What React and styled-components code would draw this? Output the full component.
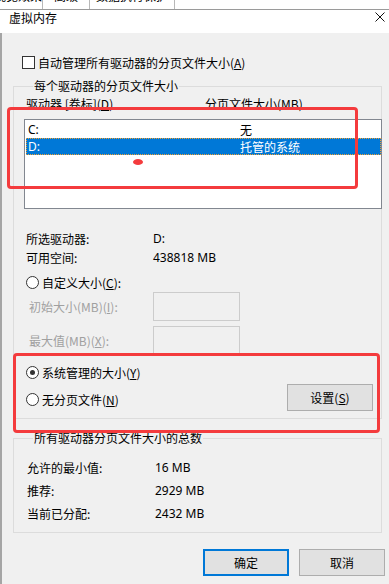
import React from "react";
import styled, {createGlobalStyle} from "styled-components";

const Global = createGlobalStyle`
    body {
        margin: 0;
        background: #fff;
        font-family: "Noto Sans CJK SC", "Noto Sans", sans-serif;
        font-size: 12px;
        color: #000;
    }
`
const Page = styled.div`
    position: relative;
    width: 389px;
    height: 584px;
    overflow: hidden;
`
const BackStrip = styled.div`
    height: 9px;
    overflow: hidden;
    border-bottom: 1px solid #9a9a9a;
    display: flex;
    background: #fff;
`
const BackTab = styled.div`
    margin-top: -12px;
    line-height: 16px;
    padding: 0 ${p => p.pad}px;
    border-right: 1px solid #b8b8b8;
    white-space: nowrap;
    font-size: 12px;
`
const TitleBar = styled.div`
    height: 22px;
    background: #fff;
    display: flex;
    align-items: flex-start;
    justify-content: space-between;
    padding: 1px 4px 0 9px;
    line-height: 14px;
`
const CloseX = styled.svg`
    width: 10px;
    height: 10px;
    margin-top: 1px;
`
const Body = styled.div`
    background: #f0f0f0;
    border-left: 2px solid #a5a5a5;
    height: 552px;
    padding: 0 4px 0 11px;
    display: flex;
    flex-direction: column;
`
const CheckRow = styled.label`
    display: flex;
    align-items: center;
    height: 16px;
    margin: 21px 0 0 9px;
    gap: 3px;
`
const CheckBox = styled.span`
    width: 11px;
    height: 11px;
    border: 1px solid #333;
    background: #fff;
`
const Group = styled.fieldset`
    margin: ${p => p.top}px 3px 0 0;
    padding: 0 0 ${p => p.bottom}px 12px;
    border: 1px solid #dcdcdc;
    min-inline-size: 0;
`
const Legend = styled.legend`
    margin-left: 7px;
    padding: 0 1px;
    line-height: 16px;
    height: 16px;
`
const HeaderRow = styled.div`
    display: flex;
    height: 16px;
    line-height: 16px;
    margin-top: 2px;
`
const HeaderCell = styled.div`
    width: ${p => p.w}px;
    white-space: nowrap;
`
const ListBox = styled.div`
    margin: 7px -1px 0 -2px;
    height: 87px;
    border: 1px solid #828790;
    background: #fff;
    padding: 1px 0 0 1px;
`
const ListRow = styled.div`
    display: flex;
    height: 15px;
    line-height: 15px;
    padding-left: 1px;
    border: 1px dotted ${p => p.selected ? "#f0a030" : "transparent"};
    background: ${p => p.selected ? "#0078d7" : "transparent"};
    color: ${p => p.selected ? "#fff" : "#000"};
`
const ListCell = styled.div`
    width: ${p => p.w}px;
    font-family: ${p => p.latin ? `"Noto Sans", "Noto Sans CJK SC", sans-serif` : "inherit"};
`
const InfoGrid = styled.div`
    display: grid;
    grid-template-columns: ${p => p.col}px auto;
    grid-auto-rows: ${p => p.row}px;
    align-items: center;
    margin: ${p => p.top}px 0 0 ${p => p.left}px;
`
const Value = styled.div`
    font-family: "Noto Sans", "Noto Sans CJK SC", sans-serif;
    font-size: 12px;
`
const RadioRow = styled.label`
    display: flex;
    align-items: center;
    height: 16px;
    gap: 3px;
    margin-top: ${p => p.top}px;
`
const Radio = styled.span`
    width: 11px;
    height: 11px;
    border: 1px solid #333;
    border-radius: 50%;
    background: #fff;
    display: flex;
    align-items: center;
    justify-content: center;
    &::after {
        content: "";
        width: 5px;
        height: 5px;
        border-radius: 50%;
        background: ${p => p.checked ? "#333" : "transparent"};
    }
`
const FieldRow = styled.div`
    display: flex;
    align-items: center;
    margin-top: ${p => p.top}px;
`
const FieldLabel = styled.div`
    width: 124px;
    padding-left: 3px;
    color: #a0a0a0;
    white-space: nowrap;
`
const TextBox = styled.div`
    width: 85px;
    height: 27px;
    border: 1px solid #cccccc;
    background: #f0f0f0;
`
const SplitRow = styled.div`
    display: flex;
    align-items: center;
    justify-content: space-between;
    margin-top: 4px;
    padding-right: 8px;
`
const Button = styled.button`
    width: 86px;
    height: 27px;
    background: #e1e1e1;
    border: ${p => p.primary ? "2px solid #0078d7" : "1px solid #adadad"};
    font-family: inherit;
    font-size: 12px;
    color: #000;
    padding: 0;
`
const Footer = styled.div`
    display: flex;
    justify-content: flex-end;
    gap: 10px;
    margin-top: 16px;
`
const Mark = styled.div`
    position: absolute;
    border: 3px solid #f43b3d;
    border-radius: 4px;
    pointer-events: none;
`
const Dot = styled.div`
    position: absolute;
    left: 133px;
    top: 159px;
    width: 10px;
    height: 6px;
    border-radius: 50%;
    background: #f43b3d;
`

const drives = [
    {name: "C:", size: "无"},
    {name: "D:", size: "托管的系统", selected: true},
];

const totals = [
    ["允许的最小值:", "16 MB"],
    ["推荐:", "2929 MB"],
    ["当前已分配:", "2432 MB"],
];

const App = () => {
    return (
        <Page>
            <Global/>
            <BackStrip>
                <BackTab pad={0} style={{marginLeft: -6}}>视觉效果 </BackTab>
                <BackTab pad={11}>高级</BackTab>
                <BackTab pad={6}>数据执行保护</BackTab>
            </BackStrip>
            <TitleBar>
                <span>虚拟内存</span>
                <CloseX viewBox="0 0 10 10">
                    <path d="M0.5 0.5L9.5 9.5M9.5 0.5L0.5 9.5" stroke="#111" strokeWidth="1"/>
                </CloseX>
            </TitleBar>
            <Body>
                <CheckRow>
                    <CheckBox/>
                    <span>自动管理所有驱动器的分页文件大小(<u>A</u>)</span>
                </CheckRow>

                <Group top={8} bottom={7}>
                    <Legend>每个驱动器的分页文件大小</Legend>
                    <HeaderRow>
                        <HeaderCell w={179}>驱动器 [卷标](<u>D</u>)</HeaderCell>
                        <HeaderCell>分页文件大小(MB)</HeaderCell>
                    </HeaderRow>
                    <ListBox>
                        {drives.map(d => (
                            <ListRow key={d.name} selected={d.selected}>
                                <ListCell w={212} latin>{d.name}</ListCell>
                                <ListCell>{d.size}</ListCell>
                            </ListRow>
                        ))}
                    </ListBox>
                    <InfoGrid col={127} row={19} top={20} left={0}>
                        <div>所选驱动器:</div>
                        <Value>D:</Value>
                        <div>可用空间:</div>
                        <Value>438818 MB</Value>
                    </InfoGrid>
                    <RadioRow top={7}>
                        <Radio/>
                        <span>自定义大小(<u>C</u>):</span>
                    </RadioRow>
                    <FieldRow top={2}>
                        <FieldLabel>初始大小(MB)(<u>I</u>):</FieldLabel>
                        <TextBox/>
                    </FieldRow>
                    <FieldRow top={5}>
                        <FieldLabel>最大值(MB)(<u>X</u>):</FieldLabel>
                        <TextBox/>
                    </FieldRow>
                    <RadioRow top={9}>
                        <Radio checked/>
                        <span>系统管理的大小(<u>Y</u>)</span>
                    </RadioRow>
                    <SplitRow>
                        <RadioRow top={3}>
                            <Radio/>
                            <span>无分页文件(<u>N</u>)</span>
                        </RadioRow>
                        <Button>设置(<u>S</u>)</Button>
                    </SplitRow>
                </Group>

                <Group top={11} bottom={7}>
                    <Legend>所有驱动器分页文件大小的总数</Legend>
                    <InfoGrid col={128} row={23} top={10} left={1}>
                        {totals.map(([label, value]) => (
                            <React.Fragment key={label}>
                                <div>{label}</div>
                                <Value>{value}</Value>
                            </React.Fragment>
                        ))}
                    </InfoGrid>
                </Group>

                <Footer>
                    <Button primary>确定</Button>
                    <Button>取消</Button>
                </Footer>
            </Body>

            <Mark style={{left: 7, top: 107, width: 345, height: 76}}/>
            <Dot/>
            <Mark style={{left: 13, top: 353, width: 361, height: 74}}/>
        </Page>
    );
}
export default App;
